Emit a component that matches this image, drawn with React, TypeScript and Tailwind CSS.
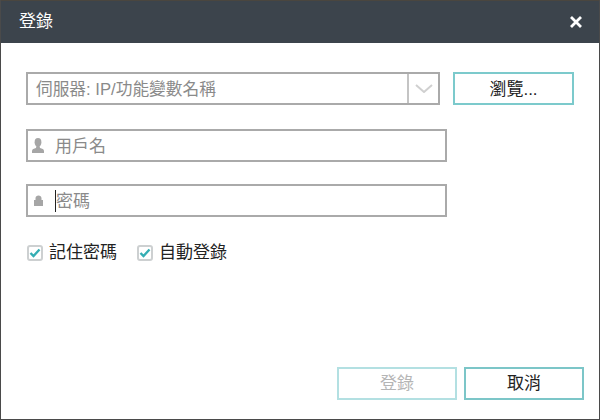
const font = "font-['Liberation_Sans','Noto_Sans_CJK_TC',sans-serif]";

const CheckItem = ({ label }: { label: string }) => (
  <label className="flex items-center gap-[6px] text-[17px] leading-[20px] text-[#222]">
    <span className="flex h-[16px] w-[16px] items-center justify-center rounded-[3px] border-2 border-[#cdd0d1] bg-white">
      <svg width="12" height="10" viewBox="0 0 12 10" fill="none">
        <path d="M1.5 5 L4.5 8 L10.5 1.5" stroke="#35aeb4" strokeWidth="2.4" />
      </svg>
    </span>
    <span className="pt-[1px]">{label}</span>
  </label>
);

const App = () => {
  return (
    <div className={`flex h-[420px] w-[600px] flex-col border-x border-b border-[#4a4a4a] bg-white ${font}`}>
      <div className="flex h-[43px] shrink-0 items-center justify-between border-t border-[#4a463f] bg-[#3c444c] pl-[18px] pr-[17px] text-white">
        <span className="text-[17px]">登錄</span>
        <svg width="12" height="12" viewBox="0 0 12 12" fill="none">
          <path d="M1 1 L11 11 M11 1 L1 11" stroke="#fff" strokeWidth="2.8" />
        </svg>
      </div>

      <div className="flex flex-1 flex-col pl-[25px] pr-[15px] pt-[29px]">
        <div className="flex items-stretch">
          <div className="flex h-[33px] w-[414px] items-center border-2 border-[#aaaaaa] pl-[8px] text-[16.7px] text-[#8a8a8a]">
            <span className="flex-1 pt-[2px]">伺服器: IP/功能變數名稱</span>
            <span className="flex h-full w-[31px] items-center justify-center border-l-2 border-[#c4c4c4]">
              <svg width="18" height="9" viewBox="0 0 18 9" fill="none">
                <path d="M1 1 L9 8 L17 1" stroke="#d0d0d0" strokeWidth="2" />
              </svg>
            </span>
          </div>
          <button className="ml-[13px] h-[33px] w-[121px] border-2 border-[#7ccacc] pt-[2px] text-[17px] text-[#222]">瀏覽...</button>
        </div>

        <div className="mt-[24px] flex h-[33px] w-[421px] items-center border-2 border-[#aaaaaa] pl-[4px] text-[17px] text-[#8a8a8a]">
          <svg width="12" height="15" viewBox="0 0 12 15" fill="#a6a6a6">
            <ellipse cx="6" cy="4.2" rx="3.4" ry="4.2" />
            <path d="M4.4 8 L7.6 8 L8 10 C10 10.6 12 11.2 12 13 L12 15 L0 15 L0 13 C0 11.2 2 10.6 4 10 Z" />
          </svg>
          <span className="ml-[11px] pt-[2px]">用戶名</span>
        </div>

        <div className="mt-[22px] flex h-[33px] w-[421px] items-center border-2 border-[#aaaaaa] pl-[6px] text-[17px] text-[#8a8a8a]">
          <svg width="9" height="11" viewBox="0 0 9 11" fill="#a6a6a6">
            <path d="M1.5 5 L1.5 3.2 C1.5 1.4 2.8 0.5 4.5 0.5 C6.2 0.5 7.5 1.4 7.5 3.2 L7.5 5 L9 5 L9 11 L0 11 L0 5 Z" />
          </svg>
          <span className="ml-[12px] border-l border-[#222] pt-[1px] leading-[21px]">密碼</span>
        </div>

        <div className="ml-[1px] mt-[25px] flex gap-[20px]">
          <CheckItem label="記住密碼" />
          <CheckItem label="自動登錄" />
        </div>

        <div className="mt-auto flex justify-end gap-[7px] pb-[19px]">
          <button className="h-[33px] w-[120px] border-2 border-[#b3e0e2] pt-[1px] text-[17px] text-[#b5b5b5]">登錄</button>
          <button className="h-[33px] w-[120px] border-2 border-[#7cc6c8] pt-[1px] text-[17px] text-[#222]">取消</button>
        </div>
      </div>
    </div>
  );
};

export default App;
